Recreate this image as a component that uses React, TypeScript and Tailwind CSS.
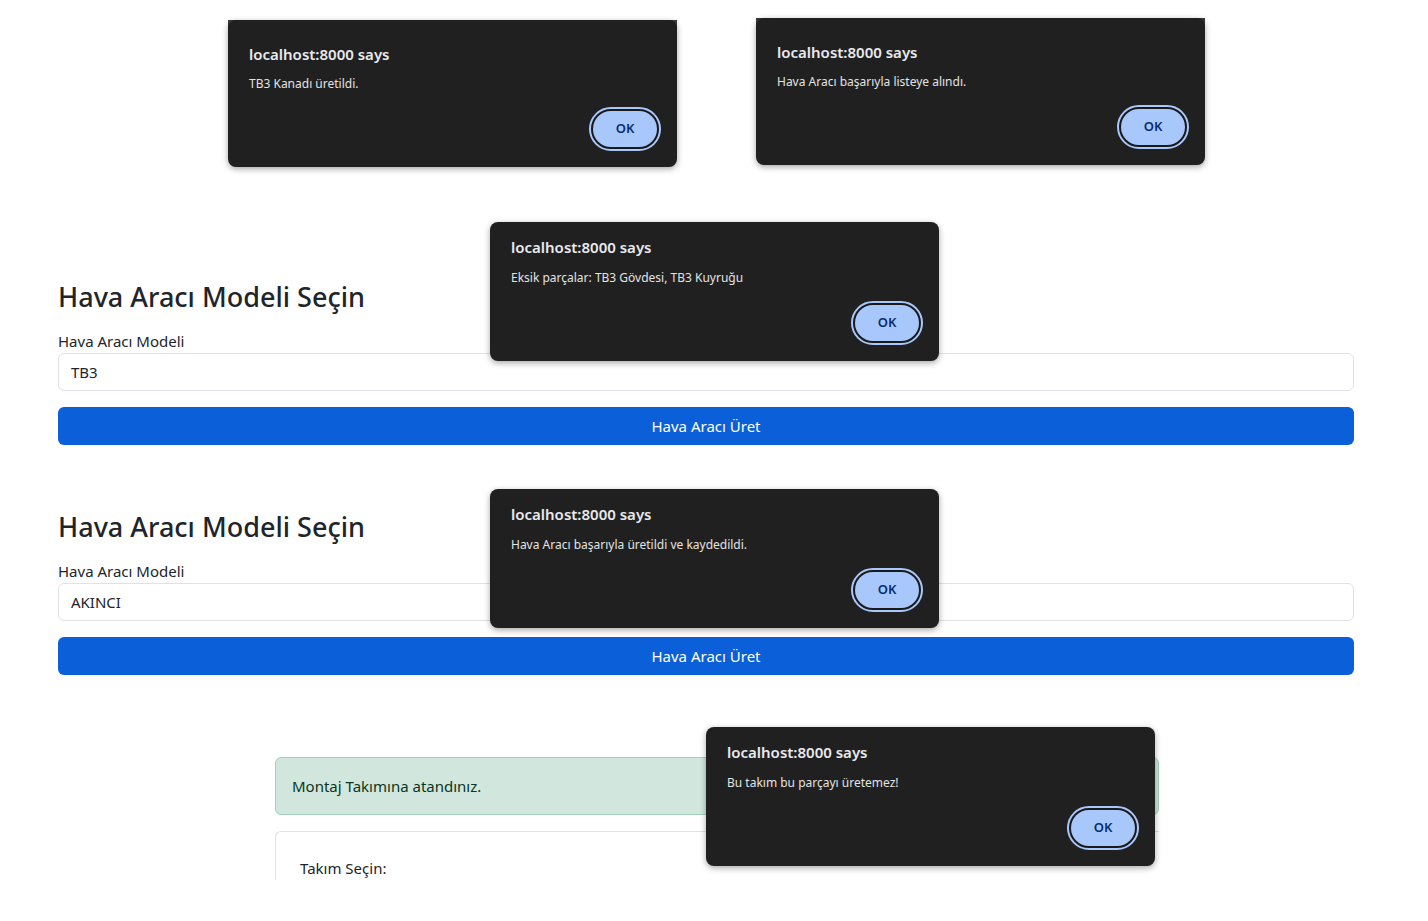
import React from "react";

type DialogProps = {
  message: string;
  tall?: boolean;
  className?: string;
};

function AlertDialog({ message, tall, className = "" }: DialogProps) {
  return (
    <div
      className={`w-[449px] rounded-lg bg-[#202020] shadow-[0_2px_6px_rgba(0,0,0,0.35)] flex flex-col pl-[21px] pr-[16px] ${
        tall ? "pt-[25px] h-[147px]" : "pt-[16px] h-[139px]"
      } ${className}`}
    >
      <div className="text-[15px] leading-[18px] font-semibold text-[#e8eaed]">
        localhost:8000 says
      </div>
      <div className={`${tall ? "mt-[13px]" : "mt-[14px]"} text-[12px] leading-[16px] text-[#e3e3e3]`}>
        {message}
      </div>
      <div className="mt-auto mb-[16px] flex justify-end">
        <div className="rounded-full border-2 border-[#a8c7fa] p-[2px] bg-[#1a1a1a]">
          <button className="w-[64px] h-[36px] rounded-full bg-[#a8c7fa] text-[13px] font-semibold text-[#062e6f]">
            OK
          </button>
        </div>
      </div>
    </div>
  );
}

function ModelForm({
  value,
  message,
  dialogTop,
}: {
  value: string;
  message: string;
  dialogTop: string;
}) {
  return (
    <section className="relative">
      <h2 className="text-[27px] leading-[33px] font-medium text-[#212529]">
        Hava Aracı Modeli Seçin
      </h2>
      <label className="block mt-[17px] mb-[1px] text-[15px] leading-[22px] text-[#212529]">
        Hava Aracı Modeli
      </label>
      <div className="h-[38px] rounded-md border border-[#dee2e6] bg-white flex items-center px-[12px] text-[15px] text-[#212529]">
        {value}
      </div>
      <button className="mt-[16px] w-full h-[38px] rounded-md bg-[#0b5fd8] text-white text-[15px]">
        Hava Aracı Üret
      </button>
      <div className={`absolute left-[432px] ${dialogTop}`}>
        <AlertDialog message={message} />
      </div>
    </section>
  );
}

export default function App() {
  return (
    <div
      className="min-h-[921px] bg-white"
      style={{ fontFamily: '"Noto Sans", "Open Sans", sans-serif' }}
    >
      <div className="flex items-start pl-[228px] gap-[79px]">
        <div className="mt-[20px] bg-[linear-gradient(#3f3f3f_0_10px,transparent_10px)]">
          <AlertDialog tall message="TB3 Kanadı üretildi." />
        </div>
        <div className="mt-[18px] bg-[linear-gradient(#3a3a3a_0_10px,transparent_10px)]">
          <AlertDialog tall message="Hava Aracı başarıyla listeye alındı." />
        </div>
      </div>

      <div className="ml-[58px] w-[1296px]">
        <div className="mt-[113px]">
          <ModelForm
            value="TB3"
            message="Eksik parçalar: TB3 Gövdesi, TB3 Kuyruğu"
            dialogTop="top-[-58px]"
          />
        </div>
        <div className="mt-[65px]">
          <ModelForm
            value="AKINCI"
            message="Hava Aracı başarıyla üretildi ve kaydedildi."
            dialogTop="top-[-21px]"
          />
        </div>
      </div>

      <div className="ml-[275px] w-[884px] mt-[82px] relative">
        <div className="h-[58px] rounded-md border border-[#a3cfbb] bg-[#d1e7dd] flex items-center px-[16px] text-[15px] text-[#0a3622]">
          Montaj Takımına atandınız.
        </div>
        <div className="mt-[16px] h-[49px] rounded-tl-md border-l border-t border-[#dee2e6] pl-[24px] pt-[25px] text-[15px] leading-[22px] text-[#212529]">
          Takım Seçin:
        </div>
        <div className="absolute left-[431px] top-[-30px]">
          <AlertDialog message="Bu takım bu parçayı üretemez!" />
        </div>
      </div>
    </div>
  );
}
